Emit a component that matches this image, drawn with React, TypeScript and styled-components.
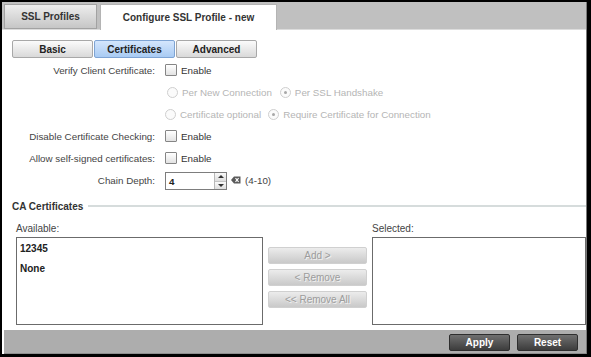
import React from "react";
import styled, { createGlobalStyle } from "styled-components";

const Global = createGlobalStyle`
  html, body { margin: 0; padding: 0; background: #000; }
  body { font-family: "Liberation Sans", Arial, sans-serif; font-size: 10px; }
  * { box-sizing: border-box; }
`;

const Frame = styled.div`
  width: 591px;
  height: 357px;
  background: #000;
  padding: 2px 4px 3px 2px;
  display: flex;
`;

const Panel = styled.div`
  flex: 1;
  background: #fff;
  border-right: 1px solid #7a7a7a;
  display: flex;
  flex-direction: column;
  overflow: hidden;
`;

const TabBar = styled.div`
  height: 28px;
  background: #c0c0c0;
  border-bottom: 1px solid #dcdcdc;
  display: flex;
  align-items: flex-end;
  padding-left: 2px;
  gap: 3px;
`;

const Tab = styled.div<{ $active?: boolean }>`
  width: ${(p) => (p.$active ? 177 : 93)}px;
  height: ${(p) => (p.$active ? 26 : 25)}px;
  margin-bottom: ${(p) => (p.$active ? -1 : 0)}px;
  display: flex;
  align-items: center;
  justify-content: center;
  font-weight: bold;
  font-size: 10px;
  color: #333;
  border: 1px solid ${(p) => (p.$active ? "#b4b4b4" : "#a2a2a2")};
  border-bottom: ${(p) => (p.$active ? "none" : "1px solid #a2a2a2")};
  background: ${(p) =>
    p.$active ? "#fff" : "linear-gradient(#ededed, #c6c6c6)"};
  padding-bottom: ${(p) => (p.$active ? 1 : 0)}px;
`;

const SubTabs = styled.div`
  display: flex;
  gap: 1px;
  margin-top: 10px;
  padding-left: 10px;
`;

const SubTab = styled.div<{ $active?: boolean }>`
  width: 81px;
  height: 18px;
  display: flex;
  align-items: center;
  justify-content: center;
  font-weight: bold;
  font-size: 10px;
  color: #222;
  border: 1px solid ${(p) => (p.$active ? "#7ea4d4" : "#a8a8a8")};
  border-radius: 2px;
  background: ${(p) =>
    p.$active
      ? "linear-gradient(#d4e6fd, #a9cbf3)"
      : "linear-gradient(#fbfbfb, #d9d9d9)"};
`;

const Form = styled.div`
  margin-top: 1px;
  display: grid;
  grid-template-columns: 153px 1fr;
  column-gap: 10px;
  grid-auto-rows: 22px;
  font-size: 9.8px;
`;

const Label = styled.div`
  display: flex;
  align-items: center;
  justify-content: flex-end;
  color: #444;
  white-space: nowrap;
`;

const Control = styled.div<{ $col?: number }>`
  grid-column: ${(p) => p.$col ?? 2};
  display: flex;
  align-items: center;
  white-space: nowrap;
`;

const Check = styled.span`
  width: 12px;
  height: 12px;
  border: 1px solid #858585;
  border-radius: 1px;
  background: linear-gradient(#ffffff, #e2e2e2);
  margin-right: 4px;
`;

const Text = styled.span<{ $disabled?: boolean }>`
  color: ${(p) => (p.$disabled ? "#b5b5b5" : "#333")};
`;

const Radio = styled.span<{ $checked?: boolean; $ml?: number }>`
  width: 11px;
  height: 11px;
  border-radius: 50%;
  border: 1px solid #cfcfcf;
  background: #fbfbfb;
  margin-left: ${(p) => p.$ml ?? 0}px;
  margin-right: 4px;
  display: flex;
  align-items: center;
  justify-content: center;
  &::after {
    content: "";
    width: 3px;
    height: 3px;
    border-radius: 50%;
    background: ${(p) => (p.$checked ? "#a8a8a8" : "transparent")};
  }
`;

const Spin = styled.div`
  width: 62px;
  height: 18px;
  margin-top: 2px;
  border: 1px solid #7d7d7d;
  display: flex;
  background: #fff;
`;

const SpinValue = styled.div`
  flex: 1;
  padding-left: 3px;
  font-weight: bold;
  color: #222;
  display: flex;
  align-items: center;
`;

const SpinButtons = styled.div`
  width: 12px;
  display: flex;
  flex-direction: column;
  border-left: 1px solid #b8b8b8;
`;

const SpinArrow = styled.div<{ $down?: boolean }>`
  flex: 1;
  display: flex;
  align-items: center;
  justify-content: center;
  background: linear-gradient(#fafafa, #dedede);
  border-top: ${(p) => (p.$down ? "1px solid #c4c4c4" : "none")};
  &::after {
    content: "";
    border-left: 3px solid transparent;
    border-right: 3px solid transparent;
    ${(p) =>
      p.$down ? "border-top: 3px solid #333;" : "border-bottom: 3px solid #333;"}
  }
`;

const Hint = styled.span`
  color: #444;
  margin-left: 4px;
  display: flex;
  align-items: center;
  gap: 4px;
`;

const Legend = styled.div`
  margin-top: 8px;
  height: 14px;
  display: flex;
  align-items: center;
  padding-left: 10px;
  font-weight: bold;
  color: #333;
  gap: 5px;
  &::after {
    content: "";
    flex: 1;
    height: 2px;
    background: #d6dcdc;
  }
`;

const Lists = styled.div`
  margin-top: 9px;
  padding-left: 14px;
  display: grid;
  grid-template-columns: 247px 99px 1fr;
  grid-template-rows: 13px 88px;
  row-gap: 2px;
  column-gap: 5px;
`;

const ListLabel = styled.div<{ $col: number }>`
  grid-column: ${(p) => p.$col};
  color: #444;
  display: flex;
  align-items: center;
`;

const ListBox = styled.div`
  border: 1px solid #6b6b6b;
  padding: 5px 3px;
  display: flex;
  flex-direction: column;
  gap: 8px;
`;

const Item = styled.div`
  font-weight: bold;
  color: #222;
  line-height: 12px;
`;

const MoveButtons = styled.div`
  display: flex;
  flex-direction: column;
  gap: 5px;
  padding-top: 10px;
`;

const MoveButton = styled.div`
  height: 17px;
  border: 1px solid #d0d0d0;
  border-radius: 2px;
  background: linear-gradient(#ececec, #c9c9c9);
  color: #9c9c9c;
  text-shadow: 1px 1px 0 #f2f2f2;
  display: flex;
  align-items: center;
  justify-content: center;
`;

const Footer = styled.div`
  margin-top: auto;
  margin-left: 2px;
  height: 24px;
  background: #adadad;
  border-bottom: 1px solid #8e8e8e;
  display: flex;
  justify-content: flex-end;
  align-items: center;
  gap: 7px;
  padding-right: 8px;
`;

const ActionButton = styled.div`
  width: 61px;
  height: 17px;
  border: 1px solid #2e2e2e;
  border-radius: 2px;
  background: linear-gradient(#707070, #3c3c3c);
  color: #fff;
  font-weight: bold;
  display: flex;
  align-items: center;
  justify-content: center;
  margin-top: 1px;
`;

const ClearIcon = () => (
  <svg width="10" height="8" viewBox="0 0 10 8">
    <path d="M0 4 L3 0.5 H9.5 V7.5 H3 Z" fill="#5a5a5a" />
    <path d="M4.5 2.2 L7.6 5.8 M7.6 2.2 L4.5 5.8" stroke="#fff" strokeWidth="1.1" />
  </svg>
);

export default function App() {
  return (
    <>
      <Global />
      <Frame>
        <Panel>
          <TabBar>
            <Tab>SSL Profiles</Tab>
            <Tab $active>Configure SSL Profile - new</Tab>
          </TabBar>
          <SubTabs>
            <SubTab>Basic</SubTab>
            <SubTab $active>Certificates</SubTab>
            <SubTab>Advanced</SubTab>
          </SubTabs>
          <Form>
            <Label>Verify Client Certificate:</Label>
            <Control>
              <Check />
              <Text>Enable</Text>
            </Control>
            <Control $col={2}>
              <Radio $ml={2} />
              <Text $disabled>Per New Connection</Text>
              <Radio $checked $ml={8} />
              <Text $disabled>Per SSL Handshake</Text>
            </Control>
            <Control $col={2}>
              <Radio />
              <Text $disabled>Certificate optional</Text>
              <Radio $checked $ml={7} />
              <Text $disabled>Require Certificate for Connection</Text>
            </Control>
            <Label>Disable Certificate Checking:</Label>
            <Control>
              <Check />
              <Text>Enable</Text>
            </Control>
            <Label>Allow self-signed certificates:</Label>
            <Control>
              <Check />
              <Text>Enable</Text>
            </Control>
            <Label>Chain Depth:</Label>
            <Control>
              <Spin>
                <SpinValue>4</SpinValue>
                <SpinButtons>
                  <SpinArrow />
                  <SpinArrow $down />
                </SpinButtons>
              </Spin>
              <Hint>
                <ClearIcon />
                (4-10)
              </Hint>
            </Control>
          </Form>
          <Legend>CA Certificates</Legend>
          <Lists>
            <ListLabel $col={1}>Available:</ListLabel>
            <ListLabel $col={3}>Selected:</ListLabel>
            <ListBox>
              <Item>12345</Item>
              <Item>None</Item>
            </ListBox>
            <MoveButtons>
              <MoveButton>Add &gt;</MoveButton>
              <MoveButton>&lt; Remove</MoveButton>
              <MoveButton>&lt;&lt; Remove All</MoveButton>
            </MoveButtons>
            <ListBox />
          </Lists>
          <Footer>
            <ActionButton>Apply</ActionButton>
            <ActionButton>Reset</ActionButton>
          </Footer>
        </Panel>
      </Frame>
    </>
  );
}
